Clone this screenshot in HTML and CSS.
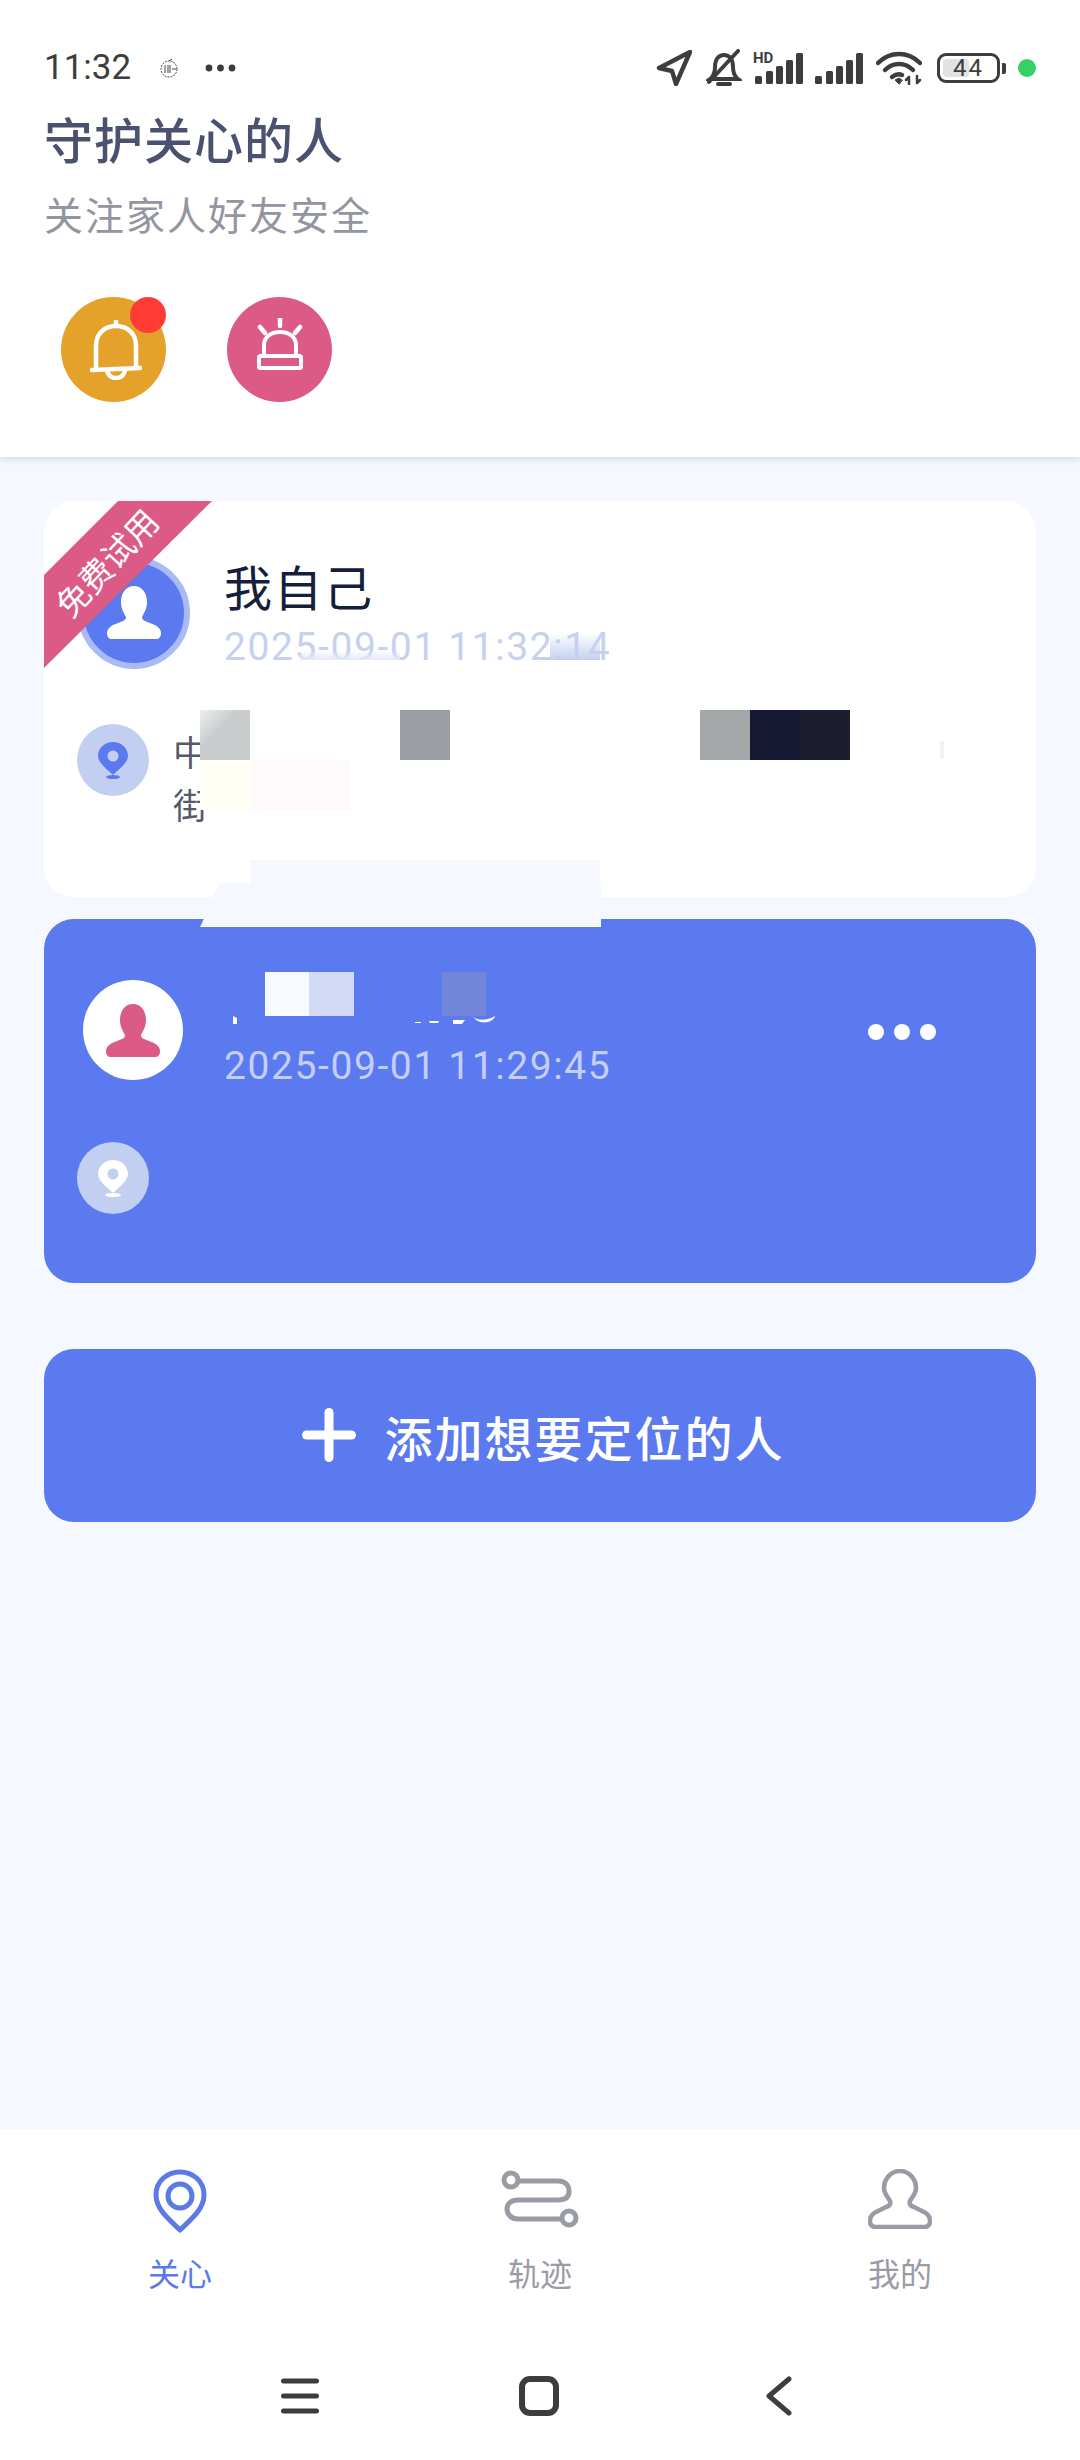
FILE: index.html
```html
<!DOCTYPE html>
<html lang="zh-CN">
<head>
<meta charset="utf-8">
<title>守护关心的人</title>
<link rel="stylesheet" href="styles.css">
</head>
<body>
<div class="app">
  <header class="header">
    <div class="status">
      <span class="time">11:32</span>
      <svg class="app-glyph" viewBox="0 0 20 20" fill="none" stroke="#444" stroke-width="1"><circle cx="10" cy="11" r="8" stroke-dasharray="2 1"/><path d="M6 7v8M9 7v8M11 7v8M13 11h4M10 3l3-2"/></svg>
      <svg class="more-dots" viewBox="0 0 31 8" fill="#3d3d3d"><circle cx="4" cy="4" r="3.4"/><circle cx="15.500" cy="4" r="3.4"/><circle cx="27" cy="4" r="3.4"/></svg>
      <div class="status-right">
        <svg class="st-loc" viewBox="0 0 36 36" fill="none" stroke="#3d3d3d" stroke-width="4.400" stroke-linejoin="round"><path d="M34 2L3 18l13 3 4 13z"/></svg>
        <svg class="st-mute" viewBox="0 0 36 38" fill="none" stroke="#3d3d3d" stroke-width="4" stroke-linecap="round"><path d="M4 30c4-3 5-6 5-12 0-8 4-12 9-12s9 4 9 12c0 6 1 9 5 12zM12 35h12"/><path d="M3 33L32 2"/></svg>
        <div class="st-sig-hd">
          <span class="hd">HD</span>
          <svg class="bars-hd" viewBox="0 0 48 31" fill="#3d3d3d"><rect x="0" y="23" width="7" height="8" rx="1.500"/><rect x="11" y="18" width="7" height="13" rx="1.500"/><rect x="21" y="13" width="7" height="18" rx="1.500"/><rect x="31" y="7" width="7" height="24" rx="1.500"/><rect x="41" y="0" width="7" height="31" rx="1.500"/></svg>
        </div>
        <svg class="bars" viewBox="0 0 48 31" fill="#3d3d3d"><rect x="0" y="23" width="7" height="8" rx="1.500"/><rect x="11" y="18" width="7" height="13" rx="1.500"/><rect x="21" y="13" width="7" height="18" rx="1.500"/><rect x="31" y="7" width="7" height="24" rx="1.500"/><rect x="41" y="0" width="7" height="31" rx="1.500"/></svg>
        <svg class="st-wifi" viewBox="0 0 46 34" fill="none" stroke="#3d3d3d" stroke-width="4.500" stroke-linecap="round"><path d="M2 12C14 0 32 0 44 12"/><path d="M9 19c8-8 20-8 28 0"/><path d="M16 26c4-3 8-3 10-2"/><path d="M23 33l-4-4 4-2 3 2z" fill="#3d3d3d" stroke-width="1"/><path d="M33 33v-7M30 29l3-3M41 25v7M44 29l-3 3" stroke-width="2.500"/></svg>
        <div class="battery">
          <div class="battery-body"><span class="battery-level"></span><span class="battery-num">44</span></div>
          <span class="battery-nub"></span>
        </div>
        <span class="green-dot"></span>
      </div>
    </div>
    <h1 class="title">守护关心的人</h1>
    <p class="subtitle">关注家人好友安全</p>
    <div class="actions">
      <div class="action action-bell">
        <svg class="bell-icon" viewBox="0 0 52 60" fill="none" stroke="#fff" stroke-width="4.500" stroke-linecap="round" stroke-linejoin="round"><path d="M26 1v5"/><path d="M6 48V26C6 14 14 6 26 6s20 8 20 20v22"/><path d="M2 50l48-2"/><path d="M17 50c1 6 5 8 9 8s8-2 9-8"/></svg>
        <span class="badge"></span>
      </div>
      <div class="action action-alarm">
        <svg class="alarm-icon" viewBox="0 0 46 52" fill="none" stroke="#fff" stroke-width="4" stroke-linecap="round" stroke-linejoin="round"><path d="M23 1v7M3 9l5 6M43 9l-5 6" stroke-width="4.500"/><path d="M7 38V27C7 19 14 14 23 14S39 19 39 27V38"/><rect x="2" y="38" width="42" height="12" rx="1.500"/></svg>
      </div>
    </div>
  </header>

  <main class="content">
    <section class="card card-self">
      <div class="person-row">
        <div class="avatar avatar-self">
          <svg class="person" viewBox="0 0 54 53" fill="#fff"><path d="M27 0C35 0 40 7 40 16C40 23 37 27 35 31C35 33 36 34 38 35L48 39C52 41 54 44 54 47C54 51 52 53 49 53L5 53C2 53 0 51 0 47C0 44 2 41 6 39L16 35C18 34 19 33 19 31C17 27 14 23 14 16C14 7 19 0 27 0Z"/></svg>
        </div>
        <div class="person-text">
          <div class="name">我自己</div>
          <div class="date date-self">2025-09-01 11:32:14</div>
        </div>
      </div>
      <div class="address-row">
        <div class="pin-badge">
          <svg class="pin" viewBox="0 0 30 37"><path fill="#5b7af0" d="M15 0C23 0 30 6 30 14C30 21 21 27 15 33C9 27 0 21 0 14C0 6 7 0 15 0Z"/><circle cx="15" cy="14" r="5.500" fill="#c2cff0"/><ellipse cx="15" cy="35" rx="7" ry="2" fill="#5b7af0"/></svg>
        </div>
        <p class="address">中<br>街</p>
      </div>
      <div class="ribbon"></div>
      <span class="ribbon-text">免费试用</span>
    </section>

    <section class="card card-other">
      <div class="person-row person-row-other">
        <div class="avatar avatar-other">
          <svg class="person" viewBox="0 0 54 53" fill="#db5a86"><path d="M27 0C35 0 40 7 40 16C40 23 37 27 35 31C35 33 36 34 38 35L48 39C52 41 54 44 54 47C54 51 52 53 49 53L5 53C2 53 0 51 0 47C0 44 2 41 6 39L16 35C18 34 19 33 19 31C17 27 14 23 14 16C14 7 19 0 27 0Z"/></svg>
        </div>
        <div class="person-text">
          <div class="name-blank"></div>
          <div class="date date-other">2025-09-01 11:29:45</div>
        </div>
        <div class="card-more"><span></span><span></span><span></span></div>
      </div>
      <div class="address-row address-row-other">
        <div class="pin-badge">
          <svg class="pin" viewBox="0 0 30 37"><path fill="#fff" d="M15 0C23 0 30 6 30 14C30 21 21 27 15 33C9 27 0 21 0 14C0 6 7 0 15 0Z"/><circle cx="15" cy="14" r="5.500" fill="#c2cff0"/><ellipse cx="15" cy="35" rx="8" ry="2" fill="#fff"/></svg>
        </div>
      </div>
    </section>

    <button class="add-btn">
      <svg class="plus" viewBox="0 0 54 54" fill="#fff"><rect x="22.500" y="0" width="9" height="54" rx="4.500"/><rect x="0" y="22.500" width="54" height="9" rx="4.500"/></svg>
      <span>添加想要定位的人</span>
    </button>
  </main>

  <nav class="tabs">
    <div class="tab tab-active">
      <svg class="tab-pin" viewBox="0 0 54 64" fill="none" stroke="#5b7ae6" stroke-width="5"><path d="M27 61C18 52 3 41 3 26C3 12 14 3 27 3S51 12 51 26C51 41 36 52 27 61Z" stroke-linejoin="round"/><circle cx="27" cy="27" r="12"/></svg>
      <span class="tab-label">关心</span>
    </div>
    <div class="tab">
      <svg class="tab-route" viewBox="0 0 78 56" fill="none" stroke="#9a9ca5" stroke-width="5"><circle cx="10" cy="9" r="7"/><circle cx="68" cy="47" r="7"/><path d="M17 10H57C64 10 68 14 68 20S64 29 57 29H17C10 29 6 33 6 38S10 48 17 48H61"/></svg>
      <span class="tab-label">轨迹</span>
    </div>
    <div class="tab">
      <svg class="tab-user" viewBox="0 0 64 60" fill="none" stroke="#9a9ca5" stroke-width="4.500" stroke-linejoin="round"><path d="M32 2C41 2 48 10 48 19C48 25 44 28 42 32C41 35 43 37 46 38L56 43C60 45 62 48 62 52C62 56 60 58 56 58L8 58C4 58 2 56 2 52C2 48 4 45 8 43L18 38C21 37 23 35 22 32C20 28 16 25 16 19C16 10 23 2 32 2Z"/></svg>
      <span class="tab-label">我的</span>
    </div>
  </nav>

  <div class="sysnav">
    <svg class="sys-menu" viewBox="0 0 38 36" fill="none" stroke="#3d3d3d" stroke-width="5" stroke-linecap="round"><path d="M2.500 3h33M2.500 18h33M2.500 33h33"/></svg>
    <span class="sys-home"></span>
    <svg class="sys-back" viewBox="0 0 26 40" fill="none" stroke="#3d3d3d" stroke-width="5" stroke-linecap="round" stroke-linejoin="round"><path d="M23 3L3 20L23 37"/></svg>
  </div>

  <!-- mosaic blocks that hide personal data in the source screenshot -->
  <span class="mask m-date-a"></span>
  <span class="mask m-date-b"></span>
  <span class="mask m-grey-1"></span>
  <span class="mask m-grey-2"></span>
  <span class="mask m-grey-3"></span>
  <span class="mask m-dark-1"></span>
  <span class="mask m-dark-2"></span>
  <span class="mask m-tint-1"></span>
  <span class="mask m-tint-2"></span>
  <span class="mask m-faint"></span>
  <span class="mask m-pale-1"></span>
  <span class="mask m-pale-2"></span>
  <span class="mask m-name-1"></span>
  <span class="mask m-name-2"></span>
  <span class="mask m-name-3"></span>
  <svg class="mask m-frag" viewBox="0 0 280 10" fill="#fff"><path d="M0 0l4 2v6H0zM182 6h6v1h-6zM196 5h10l-1 2h-8zM220 4h12l-3 4h-9zM240 0c3 5 14 5 22 0c-2 8-18 9-22 0z"/></svg>
</div>
</body>
</html>
```
FILE: styles.css
```css
* { box-sizing: border-box; }
html, body { margin: 0; padding: 0; }
body { font-family: "Noto Sans CJK SC", Roboto, sans-serif; }

.app {
  position: relative;
  width: 1080px;
  height: 2460px;
  display: flex;
  flex-direction: column;
  background: #f5f8ff;
  overflow: hidden;
}

/* header */
.header {
  height: 457px;
  flex: none;
  background: #fff;
  box-shadow: 0 2px 7px rgba(40, 50, 80, .16);
  padding: 48px 0 0 44px;
}
.status { display: flex; align-items: center; height: 40px; padding-right: 44px; }
.time { font: 400 35px/40px Roboto, sans-serif; color: #3d3d3d; width: 115px; }
.app-glyph { width: 20px; height: 20px; }
.more-dots { width: 31px; height: 8px; margin-left: 26px; }
.status-right { margin-left: auto; display: flex; align-items: center; }
.st-loc { width: 36px; height: 36px; }
.st-mute { width: 36px; height: 38px; margin-left: 14px; }
.st-sig-hd { position: relative; width: 50px; height: 31px; margin-left: 11px; }
.hd { position: absolute; left: 0; top: -3px; font: 700 15px/16px Roboto, sans-serif; color: #3d3d3d; }
.bars-hd { position: absolute; left: 2px; top: 0; width: 48px; height: 31px; }
.bars { width: 48px; height: 31px; margin-left: 12px; }
.st-wifi { width: 46px; height: 34px; margin-left: 13px; }
.battery { display: flex; align-items: center; margin-left: 15px; }
.battery-body {
  position: relative;
  width: 63px;
  height: 30px;
  border: 3.500px solid #3d3d3d;
  border-radius: 9px;
  display: flex;
  align-items: center;
  justify-content: center;
}
.battery-level { position: absolute; left: 3px; top: 3px; bottom: 3px; width: 26px; background: #e2e2e2; border-radius: 3px; }
.battery-num { position: relative; font: 400 24px/24px Roboto, sans-serif; letter-spacing: 2px; color: #3d3d3d; }
.battery-nub { width: 4px; height: 11px; margin-left: 2px; background: #3d3d3d; border-radius: 0 2px 2px 0; }
.green-dot { width: 18px; height: 18px; margin-left: 12px; border-radius: 50%; background: #34d166; }

.title { margin: 20px 0 0; font-size: 49px; line-height: 60px; font-weight: 500; letter-spacing: 1px; color: #4a5270; }
.subtitle { margin: 20px 0 0; font-size: 39px; line-height: 50px; font-weight: 400; letter-spacing: 2px; color: #9396a0; }
.actions { display: flex; gap: 61px; margin: 59px 0 0 17px; }
.action { position: relative; width: 105px; height: 105px; border-radius: 50%; display: flex; align-items: center; justify-content: center; }
.action-bell { background: #e5a22a; }
.action-alarm { background: #db5a86; }
.bell-icon { width: 52px; height: 60px; margin-left: 5px; }
.alarm-icon { width: 46px; height: 52px; margin-top: -11px; }
.badge { position: absolute; right: 0; top: 0; width: 36px; height: 36px; border-radius: 50%; background: #ff3b36; }

/* content */
.content { flex: 1; padding: 44px 44px 0; display: flex; flex-direction: column; }
.card { position: relative; border-radius: 30px; }
.card-self { height: 396px; background: #fff; }
.card-other { height: 364px; margin-top: 22px; background: #5b7af0; }

.ribbon {
  position: absolute;
  left: 0;
  top: 0;
  width: 168px;
  height: 167px;
  background: #db5a86;
  clip-path: polygon(74px 0, 168px 0, 0 167px, 0 74px);
}
.ribbon-text {
  position: absolute;
  left: -5px;
  top: 44px;
  width: 134px;
  text-align: center;
  font-size: 33px;
  line-height: 34px;
  white-space: nowrap;
  color: #fff;
  transform: rotate(-47deg);
}
.person-row { display: flex; align-items: flex-start; padding: 56px 0 0 34px; }
.person-row-other { padding: 61px 0 0 39px; }
.avatar { flex: none; border-radius: 50%; display: flex; align-items: center; justify-content: center; }
.avatar-self { width: 112px; height: 112px; background: #5b7af0; border: 6px solid #a9bbf6; margin-right: 34px; }
.avatar-other { width: 100px; height: 100px; background: #fff; margin-right: 41px; }
.person { width: 54px; height: 53px; }
.avatar-self .person { margin-top: -2px; }
.person-text { display: flex; flex-direction: column; }
.name { font-size: 48px; line-height: 60px; letter-spacing: 2px; color: #14203a; margin-top: -2px; }
.name-blank { height: 57px; }
.date { font: 400 39px/50px Roboto, sans-serif; letter-spacing: 1.600px; margin-top: 4px; }
.date-self { color: #c6d1ee; margin-top: 7px; }
.date-other { color: #c3cff7; }
.card-more { position: absolute; right: 100px; top: 105px; display: flex; gap: 10px; }
.card-more span { width: 16px; height: 16px; border-radius: 50%; background: #fff; }

.address-row { display: flex; align-items: flex-start; padding: 52px 0 0 33px; }
.address-row-other { padding-top: 51px; }
.pin-badge { flex: none; width: 72px; height: 72px; border-radius: 50%; background: #c2cff0; display: flex; align-items: center; justify-content: center; }
.pin { width: 30px; height: 37px; }
.address { margin: 0 0 0 24px; font-size: 35px; line-height: 53px; color: #555a68; }

.add-btn {
  height: 173px;
  margin-top: 66px;
  border: 0;
  padding: 0;
  border-radius: 30px;
  background: #5b7af0;
  color: #fff;
  font-family: "Noto Sans CJK SC", sans-serif;
  font-size: 48px;
  font-weight: 500;
  letter-spacing: 2px;
  display: flex;
  align-items: center;
  justify-content: center;
  gap: 28px;
}
.plus { width: 54px; height: 54px; margin: -2px 0 0 7px; }

/* bottom tabs */
.tabs { flex: none; height: 203px; background: #fff; display: grid; grid-template-columns: repeat(3, 360px); }
.tab { display: flex; flex-direction: column; align-items: center; }
.tab svg { margin-top: 40px; height: 60px; }
.tab-pin { width: 54px; }
.tab-route { width: 78px; }
.tab-user { width: 64px; }
.tab-label { margin-top: 20px; font-size: 32px; line-height: 46px; color: #9a9ca5; }
.tab-active .tab-label { color: #5b7ae6; }
.tab .tab-pin { height: 64px; }
.tab-active .tab-label { margin-top: 16px; }

.sysnav { flex: none; height: 128px; background: #fff; display: flex; align-items: center; padding-left: 281px; }
.sys-menu { width: 38px; height: 36px; }
.sys-home { width: 40px; height: 40px; margin-left: 200px; border: 6px solid #3d3d3d; border-radius: 11px; }
.sys-back { width: 26px; height: 40px; margin-left: 207px; }

/* masks */
.mask { position: absolute; display: block; }
.m-date-a { left: 550px; top: 633px; width: 50px; height: 27px; background: linear-gradient(to bottom, rgba(197, 208, 240, 0), #c5d0f0); }
.m-date-b { left: 300px; top: 650px; width: 100px; height: 10px; background: linear-gradient(to bottom, rgba(220, 226, 245, 0), #e4e9f8); }
.m-grey-1 { left: 200px; top: 710px; width: 50px; height: 50px; background: linear-gradient(135deg, #eceeee, #c8cccd 40%); }
.m-grey-2 { left: 400px; top: 710px; width: 50px; height: 50px; background: #9c9ea6; }
.m-grey-3 { left: 700px; top: 710px; width: 50px; height: 50px; background: #a4a7a8; }
.m-dark-1 { left: 750px; top: 710px; width: 50px; height: 50px; background: #161833; }
.m-dark-2 { left: 800px; top: 710px; width: 50px; height: 50px; background: #1c1e2f; }
.m-tint-1 { left: 200px; top: 760px; width: 50px; height: 50px; background: #fffff6; }
.m-tint-2 { left: 250px; top: 760px; width: 100px; height: 50px; background: #fffbfd; }
.m-faint { left: 940px; top: 741px; width: 4px; height: 18px; background: #f2f3f5; }
.m-pale-1 { left: 250px; top: 860px; width: 350px; height: 50px; background: #f6f8fe; }
.m-pale-2 { left: 200px; top: 883px; width: 401px; height: 44px; background: #f5f8fe; clip-path: polygon(19px 0, 100% 0, 100% 100%, 0 100%, 2px 40px, 19px 0); }
.m-name-1 { left: 265px; top: 972px; width: 44px; height: 44px; background: #f7faff; }
.m-name-2 { left: 309px; top: 972px; width: 45px; height: 44px; background: #d2daf6; }
.m-name-3 { left: 442px; top: 972px; width: 44px; height: 44px; background: #7385d8; }
.m-frag { left: 233px; top: 1016px; width: 280px; height: 10px; }
```
